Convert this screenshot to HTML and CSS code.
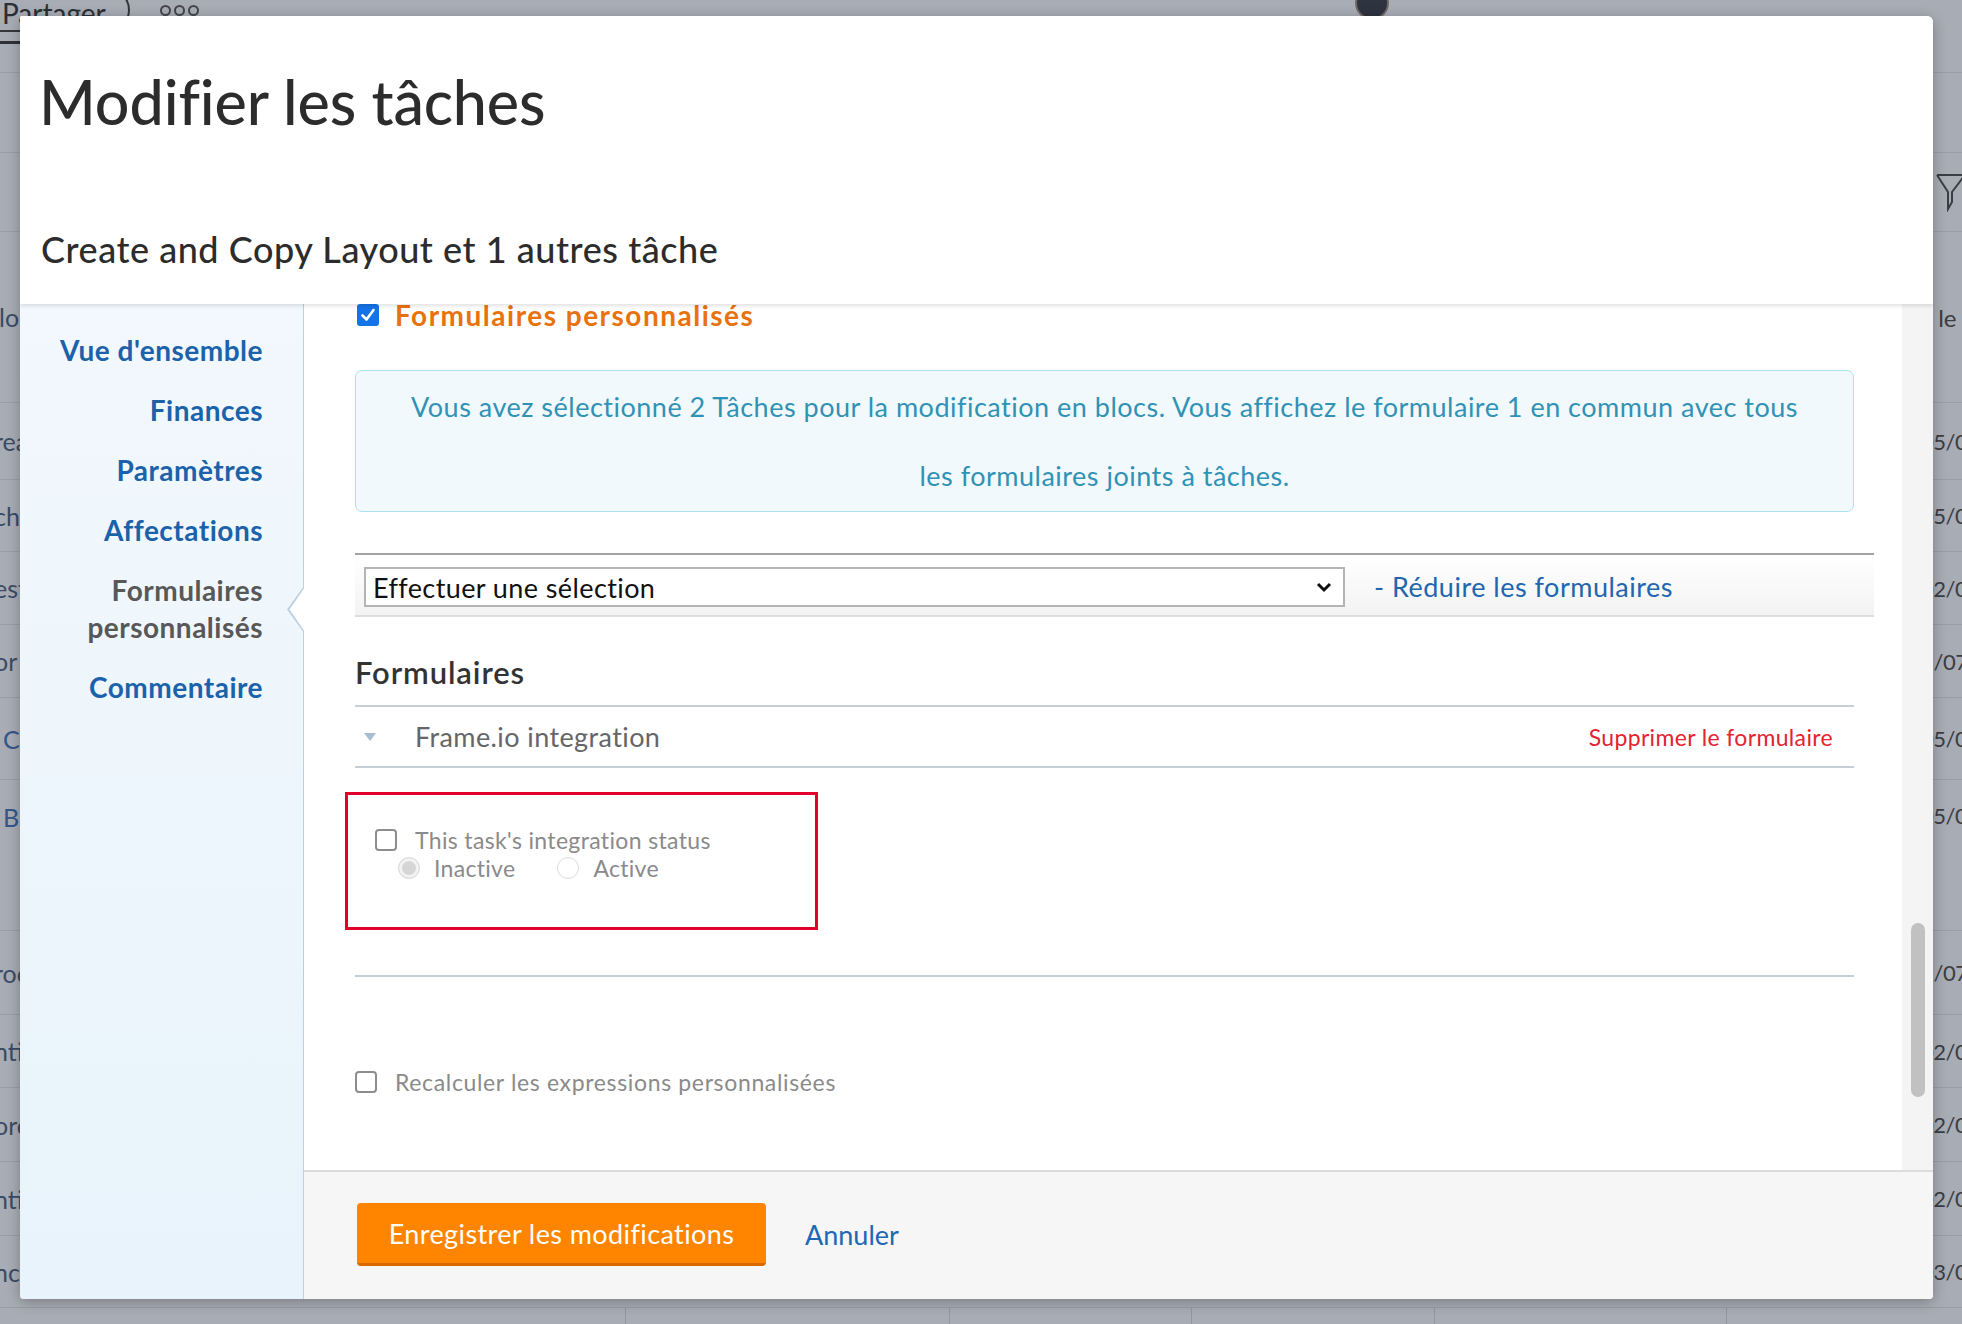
FILE: index.html
```html
<!DOCTYPE html>
<html lang="fr">
<head>
<meta charset="utf-8">
<title>Modifier les tâches</title>
<link rel="stylesheet" href="styles.css">
</head>
<body>
<div class="app">
  <div class="topbar">
    <div class="share">Partager</div>
    <div class="more"><span></span><span></span><span></span></div>
    <div class="avatar"></div>
  </div>
  <div class="band b1"><span class="tab-line"></span></div>
  <div class="band b2"></div>
  <div class="band b3">
    <svg class="funnel" width="30" height="40" viewBox="0 0 30 40"><path d="M2 3 H30 M2 3 L13 20 V37 L17 30 V20 L30 3" fill="none" stroke="#3a3d44" stroke-width="2"/></svg>
  </div>
  <div class="trow thead"><span class="lt">lo</span><span class="rt"><svg width="10" height="18" viewBox="0 0 10 18"><path d="M1 4 H9 V16 H1" fill="none" stroke="#3b3d42" stroke-width="2"/></svg> le</span></div>
  <div class="trow h77"><span class="lt">rea</span><span class="rt">05/07</span></div>
  <div class="trow h72"><span class="lt">che</span><span class="rt">05/07</span></div>
  <div class="trow h73"><span class="lt">est</span><span class="rt">02/07</span></div>
  <div class="trow h73"><span class="lt">or</span><span class="rt shift">15/07</span></div>
  <div class="trow h82"><span class="lt link">C</span><span class="rt">05/07</span></div>
  <div class="trow h151 top"><span class="lt link">B</span><span class="rt">05/07</span></div>
  <div class="trow h84"><span class="lt">roc</span><span class="rt shift">15/07</span></div>
  <div class="trow h73"><span class="lt">nti</span><span class="rt">02/07</span></div>
  <div class="trow h74"><span class="lt">ore</span><span class="rt">02/07</span></div>
  <div class="trow h74"><span class="lt">nti</span><span class="rt">02/07</span></div>
  <div class="trow h72"><span class="lt">nc</span><span class="rt">03/07</span></div>
  <div class="cols"><span class="c1"></span><span class="c2"></span><span class="c3"></span><span class="c4"></span><span class="c5"></span></div>
</div>

<div class="modal">
  <header class="m-head">
    <h1 class="m-title">Modifier les tâches</h1>
    <h2 class="m-sub">Create and Copy Layout et 1 autres tâche</h2>
  </header>
  <div class="m-body">
    <nav class="side">
      <a class="side-item">Vue d'ensemble</a>
      <a class="side-item">Finances</a>
      <a class="side-item">Paramètres</a>
      <a class="side-item">Affectations</a>
      <a class="side-item active">Formulaires<br>personnalisés</a>
      <a class="side-item">Commentaire</a>
    </nav>
    <div class="main">
      <div class="main-row">
        <div class="scroll">
          <div class="sec-head">
            <svg class="cb-on" width="22" height="22" viewBox="0 0 22 22"><rect x="0" y="0" width="22" height="22" rx="3" fill="#1473e6"/><path d="M5.5 11.5 L9.5 15.5 L16.5 6" fill="none" stroke="#fff" stroke-width="2.6" stroke-linecap="round" stroke-linejoin="round"/></svg>
            <span class="sec-title">Formulaires personnalisés</span>
          </div>
          <div class="info">Vous avez sélectionné 2 Tâches pour la modification en blocs. Vous affichez le formulaire 1 en commun avec tous<br>les formulaires joints à tâches.</div>
          <div class="pick">
            <div class="select">
              <span>Effectuer une sélection</span>
              <svg width="16" height="11" viewBox="0 0 16 11"><path d="M2 2 L8 8 L14 2" fill="none" stroke="#111" stroke-width="3"/></svg>
            </div>
            <a class="collapse">- Réduire les formulaires</a>
          </div>
          <h3 class="forms-title">Formulaires</h3>
          <div class="form-row">
            <svg class="tri" width="12" height="8" viewBox="0 0 12 8"><path d="M0 0 H12 L6 8 Z" fill="#a9bdd1"/></svg>
            <span class="form-name">Frame.io integration</span>
            <a class="remove">Supprimer le formulaire</a>
          </div>
          <div class="highlight">
            <div class="field"><span class="cb"></span><span>This task's integration status</span></div>
            <div class="radios">
              <span class="radio on"></span><span class="rlabel first">Inactive</span>
              <span class="radio"></span><span class="rlabel">Active</span>
            </div>
          </div>
          <div class="divider"></div>
          <div class="recalc"><span class="cb"></span><span>Recalculer les expressions personnalisées</span></div>
        </div>
        <div class="scrollbar"><div class="thumb"></div></div>
      </div>
      <footer class="m-foot">
        <button class="save">Enregistrer les modifications</button>
        <a class="cancel">Annuler</a>
      </footer>
    </div>
  </div>
</div>
</body>
</html>
```

FILE: styles.css
```css
* { box-sizing: border-box; }
html, body { margin: 0; padding: 0; }
body {
  width: 1962px;
  height: 1324px;
  overflow: hidden;
  position: relative;
  background: #a8acb4;
  font-family: Lato, "Open Sans", sans-serif;
}

/* ---------- background app (dimmed) ---------- */
.app { display: flex; flex-direction: column; height: 1324px; color: #3b3d42; font-size: 24px; }
.topbar { height: 43px; display: flex; align-items: flex-start; flex: none; }
.share {
  margin-left: -30px;
  margin-top: -12px;
  height: 44px;
  padding: 9px 22px 0 30px;
  border: 2px solid #34363b;
  border-radius: 22px;
  color: #2c2e33;
  font-size: 28px;
  line-height: 28px;
}
.more { display: flex; gap: 3px; margin-left: 30px; margin-top: 5px; }
.more span { width: 11px; height: 11px; border: 2px solid #44464c; border-radius: 50%; }
.avatar {
  width: 30px; height: 30px; margin-left: 1158px; margin-top: -12px;
  border-radius: 50%; background: #2e3340; box-shadow: 0 0 0 2px #6d6a66;
}
.band { flex: none; border-top: 1px solid #9a9ea6; display: flex; }
.b1 { height: 29px; border-top: none; }
.tab-line { width: 20px; height: 3px; background: #2f3137; margin-top: -2px; }
.b2 { height: 80px; }
.b3 { height: 80px; justify-content: flex-end; align-items: center; border-bottom: 1px solid #9a9ea6; }
.funnel { margin-right: -3px; }
.trow {
  flex: none; display: flex; align-items: center; justify-content: space-between;
  border-bottom: 1px solid #999da6;
}
.trow.top { align-items: flex-start; padding-top: 22px; }
.thead { height: 171px; border-bottom: 1px solid #9a9ea6; }
.lt { margin-left: -6px; color: #3a4b66; font-size: 25px; }
.thead .lt { margin-left: -1px; }
.lt.link { color: #35568a; margin-left: 3px; }
.rt { margin-right: -29px; width: 70px; color: #3b3d42; font-size: 22px; letter-spacing: -0.5px; white-space: nowrap; }
.rt.shift { text-indent: -12px; }
.thead .rt { margin-right: -30px; font-size: 24px; letter-spacing: 0; }
.h72 { height: 72px; } .h73 { height: 73px; } .h74 { height: 74px; } .h77 { height: 77px; }
.h82 { height: 82px; } .h84 { height: 84px; } .h151 { height: 151px; }
.cols { flex: 1; display: flex; }
.cols span { border-right: 1px solid #9296a0; height: 100%; }
.c1 { width: 626px; } .c2 { width: 324px; } .c3 { width: 242px; } .c4 { width: 243px; } .c5 { width: 292px; }

/* ---------- modal ---------- */
.modal {
  position: absolute;
  left: 20px; top: 16px;
  width: 1913px; height: 1283px;
  background: #fff;
  border-radius: 2px 6px 4px 4px;
  box-shadow: 0 3px 14px rgba(0,0,0,0.28);
  display: flex; flex-direction: column;
  overflow: hidden;
}
.m-head {
  flex: none; height: 288px;
  padding: 50px 0 0 21px;
  position: relative; z-index: 2;
  background: #fff;
  box-shadow: 0 2px 4px rgba(0,0,0,0.12);
}
.m-title {
  margin: 0 0 0 -2px;
  font-size: 61px; line-height: 72px; font-weight: 500;
  color: #2c2c2c; letter-spacing: -0.1px;
}
.m-sub {
  margin: 90px 0 0 0;
  font-size: 36px; line-height: 42px; font-weight: 500;
  color: #2c2c2c; letter-spacing: 0.55px;
}
.m-body { flex: 1; display: flex; min-height: 0; }

/* sidebar */
.side {
  flex: none; width: 284px;
  background: linear-gradient(180deg, #f2f8fd 0%, #e8f3fb 100%);
  border-right: 1px solid #bcd0e1;
  padding: 28px 40px 0 0;
  display: flex; flex-direction: column; align-items: flex-end; gap: 23px;
}
.side-item {
  text-align: right;
  font-size: 28px; line-height: 37px; font-weight: 700;
  letter-spacing: 0.5px;
  color: #1b62ab;
  position: relative;
}
.side-item.active { color: #585858; }
.side-item.active::before,
.side-item.active::after {
  content: "";
  position: absolute;
  top: 14px; right: -41px;
  width: 17px; height: 47px;
  clip-path: polygon(100% 0, 0 50%, 100% 100%);
}
.side-item.active::before { background: #bcd0e1; }
.side-item.active::after { background: #fff; right: -42px; width: 17px; clip-path: polygon(100% 1px, 1.5px 50%, 100% calc(100% - 1px)); }

/* main */
.main { flex: 1; display: flex; flex-direction: column; min-width: 0; }
.main-row { flex: 1; display: flex; min-height: 0; }
.scroll { flex: 1; padding: 0 48px 0 51px; overflow: hidden; }
.scrollbar { flex: none; width: 31px; background: #f4f4f4; padding: 619px 0 0 9px; }
.thumb { width: 14px; height: 174px; border-radius: 7px; background: #c1c1c1; }

.sec-head { margin-top: -6px; height: 34px; display: flex; align-items: center; gap: 16px; padding-left: 2px; }
.sec-title { font-size: 28px; font-weight: 700; color: #e8720c; letter-spacing: 1.5px; }

.info {
  margin-top: 38px;
  height: 142px;
  border: 1px solid #a9e1ef;
  border-radius: 7px;
  background: #f2f9fc;
  color: #3092b5;
  text-align: center;
  font-size: 27px; line-height: 69px; letter-spacing: 0.5px;
  padding: 1px 0;
  white-space: nowrap;
}

.pick {
  margin-top: 41px; margin-right: -20px;
  height: 64px;
  border-top: 2px solid #a3a3a3;
  border-bottom: 2px solid #dedede;
  background: linear-gradient(180deg, #ffffff 0%, #f3f3f3 100%);
  display: flex; align-items: flex-start;
  padding: 12px 0 0 9px;
}
.select {
  width: 981px; height: 40px;
  border: 2px solid #b4b4b4;
  background: #fff;
  display: flex; align-items: center; justify-content: space-between;
  padding: 0 11px 0 7px;
  font-size: 27px; letter-spacing: 0.4px; color: #111;
}
.collapse { margin-left: 29px; line-height: 40px; font-size: 27px; letter-spacing: 0.5px; color: #2166ae; }

.forms-title { margin: 37px 0 0 0; font-size: 31px; line-height: 36px; font-weight: 600; letter-spacing: 0.9px; color: #333; }

.form-row {
  margin-top: 15px;
  height: 63px;
  border-top: 2px solid #c6ced8;
  border-bottom: 2px solid #c6ced8;
  display: flex; align-items: center;
  padding: 0 21px 0 9px;
}
.form-name { margin-left: 39px; font-size: 27px; letter-spacing: 0.4px; color: #666; }
.remove { margin-left: auto; font-size: 23px; color: #e42230; letter-spacing: 0.35px; }

.highlight {
  margin: 24px 0 0 -10px;
  width: 473px; height: 138px;
  border: 3px solid #e3002b;
  padding: 33px 0 0 27px;
}
.field { display: flex; align-items: center; gap: 18px; height: 23px; font-size: 23px; letter-spacing: 0.35px; color: #8a8a8a; }
.cb { flex: none; width: 22px; height: 22px; border: 2px solid #8d8d8d; border-radius: 4px; background: #fff; }
.radios { display: flex; align-items: center; height: 28px; margin-top: 3px; padding-left: 23px; font-size: 23px; letter-spacing: 0.3px; color: #8a8a8a; }
.radio { flex: none; width: 22px; height: 22px; border-radius: 50%; border: 1.5px solid #dcdcdc; background: #fff; }
.radio.on { background: #d6d6d6; box-shadow: inset 0 0 0 3px #f3f3f3; }
.rlabel { margin-left: 14px; }
.rlabel.first { margin-right: 42px; }

.divider { margin-top: 45px; height: 2px; background: #c6ced8; }

.recalc { margin-top: 93px; display: flex; align-items: center; gap: 18px; height: 24px; font-size: 23px; letter-spacing: 0.65px; color: #8a8a8a; }

/* footer */
.m-foot {
  flex: none; height: 129px;
  border-top: 2px solid #dcdcdc;
  background: #f6f6f6;
  display: flex; align-items: flex-start;
  padding: 31px 0 0 53px;
}
.save {
  width: 409px; height: 63px;
  border: none; border-bottom: 3px solid #d86a00;
  border-radius: 4px;
  background: #ff8500;
  color: #fff;
  font-family: Lato, "Open Sans", sans-serif;
  font-size: 27px; letter-spacing: 0.4px;
  padding: 0;
}
.cancel { margin-left: 39px; line-height: 63px; font-size: 27px; color: #2068b3; }
```
